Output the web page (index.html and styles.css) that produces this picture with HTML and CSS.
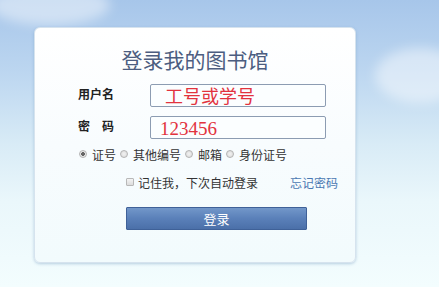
FILE: index.html
```html
<!DOCTYPE html>
<html lang="zh-CN">
<head>
  <meta charset="UTF-8">
  <title>登录我的图书馆</title>
  <link rel="stylesheet" href="styles.css">
</head>
<body>
  <div class="sky">
    <span class="cloud cloud-left"></span>
    <span class="cloud cloud-right"></span>
    <div class="login-box">
      <h1>登录我的图书馆</h1>
      <div class="form-row">
        <label class="field-label" for="user">用户名</label>
        <div class="field user-field" id="user">工号或学号</div>
      </div>
      <div class="form-row">
        <label class="field-label" for="pass">密　码</label>
        <div class="field pass-field" id="pass">123456</div>
      </div>
      <div class="radio-row">
        <span class="radio checked"></span><span class="radio-text">证号</span>
        <span class="radio"></span><span class="radio-text">其他编号</span>
        <span class="radio"></span><span class="radio-text">邮箱</span>
        <span class="radio"></span><span class="radio-text">身份证号</span>
      </div>
      <div class="remember-row">
        <span class="check"></span><span class="remember-text">记住我，下次自动登录</span>
        <a class="forgot" href="#">忘记密码</a>
      </div>
      <button class="login-btn">登录</button>
    </div>
  </div>
</body>
</html>
```

FILE: styles.css
```css
* {
  box-sizing: border-box;
}

body {
  margin: 0;
  font-family: "Noto Sans CJK SC", "Liberation Sans", sans-serif;
  color: #333;
}

.sky {
  position: relative;
  width: 439px;
  height: 287px;
  overflow: hidden;
  padding: 27px 0 0 34px;
  background: linear-gradient(to bottom, #a7c6ea 0%, #bcd6f0 25%, #d8ebf6 50%, #eaf7fb 70%, #f3fdfe 100%);
}

.cloud {
  position: absolute;
  border-radius: 50%;
  background: rgba(255, 255, 255, 0.45);
  filter: blur(6px);
}

.cloud-left {
  left: -10px;
  top: -15px;
  width: 120px;
  height: 40px;
}

.cloud-right {
  left: 375px;
  top: 48px;
  width: 90px;
  height: 55px;
}

.login-box {
  position: relative;
  width: 322px;
  height: 236px;
  padding: 17px 0 0 43px;
  background: linear-gradient(to bottom, #ffffff 0%, #f8fcfe 50%, #f2fbfd 100%);
  border: 1px solid #d6e3ee;
  border-radius: 6px;
  box-shadow: 0 1px 3px rgba(110, 150, 190, 0.45);
}

h1 {
  margin: 0 0 11px -43px;
  text-align: center;
  font-size: 21px;
  font-weight: normal;
  line-height: 28px;
  color: #4c5d80;
}

.form-row {
  display: flex;
  align-items: center;
  height: 23px;
  margin-bottom: 9px;
}

.field-label {
  width: 72px;
  font-size: 12px;
  font-weight: bold;
  color: #222;
  margin-top: -4px;
}

.field {
  width: 176px;
  height: 23px;
  border: 1px solid #8c9cb2;
  border-radius: 2px;
  background: #fbfeff;
  color: #e2333e;
  font-size: 18px;
  line-height: 21px;
  white-space: nowrap;
}

.user-field {
  padding-left: 14px;
}

.pass-field {
  padding-left: 9px;
  font-family: "Liberation Serif", serif;
  font-size: 19px;
  line-height: 24px;
}

.radio-row {
  display: flex;
  align-items: center;
  height: 18px;
  margin: -3px 0 0 1px;
  font-size: 12px;
}

.radio {
  width: 8px;
  height: 8px;
  border-radius: 50%;
  border: 1px solid #b4b4b4;
  background: radial-gradient(circle, #f2f2f2 0%, #d8d8d8 100%);
  margin-right: 5px;
}

.radio.checked {
  background: radial-gradient(circle, #666 0 1.6px, #eee 2.2px, #d6d6d6 100%);
}

.radio-text {
  margin-right: 4px;
}

.remember-row {
  display: flex;
  align-items: center;
  height: 18px;
  margin: 10px 0 0 48px;
  font-size: 12px;
}

.check {
  width: 8px;
  height: 8px;
  border: 1px solid #b8b8b8;
  border-radius: 1px;
  background: linear-gradient(to bottom, #f4f4f4, #dcdcdc);
  margin-right: 4px;
}

.forgot {
  margin-left: 32px;
  color: #4a78b2;
  text-decoration: none;
}

.login-btn {
  display: block;
  width: 181px;
  height: 23px;
  margin: 16px 0 0 48px;
  padding: 0;
  border: 1px solid #3f6198;
  border-radius: 1px;
  background: linear-gradient(to bottom, #7297c9 0%, #5a80b9 50%, #4b70a9 100%);
  color: #fff;
  font-family: "Noto Sans CJK SC", sans-serif;
  font-size: 13px;
  line-height: 20px;
}
```
